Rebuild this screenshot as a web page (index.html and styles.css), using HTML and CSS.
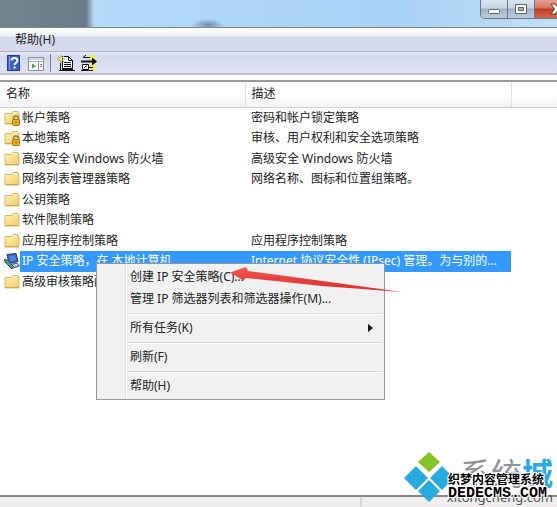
FILE: index.html
```html
<!DOCTYPE html>
<html lang="zh-CN">
<head>
    <meta charset="UTF-8">
    <meta name="viewport" content="width=device-width, initial-scale=1.0">
    <title>安全策略</title>
    <link rel="stylesheet" href="styles.css">
</head>
<body>
    <!-- shared icons -->
    <svg class="defs" aria-hidden="true">
        <defs>
            <linearGradient id="paper" x1="0" y1="0" x2="1" y2="1">
                <stop offset="0" stop-color="#fff3b4"/>
                <stop offset="1" stop-color="#efcb68"/>
            </linearGradient>
            <linearGradient id="red" x1="0" y1="0" x2="0" y2="1">
                <stop offset="0" stop-color="#f25a50"/>
                <stop offset="1" stop-color="#d92c26"/>
            </linearGradient>
            <symbol id="folder" viewBox="0 0 16 16">
                <path d="M1 3.500h7l1-2h5v2h1v10.500H1z" fill="url(#paper)" stroke="#dcb863"/>
                <path d="M9 3h4" stroke="#fffbe8"/>
                <path d="M2 13.500h12" stroke="#cfa750"/>
            </symbol>
            <symbol id="lock" viewBox="0 0 16 16">
                <path d="M9.500 10V8.500a2.500 2.500 0 0 1 5 0V10" fill="none" stroke="#9a7a2c" stroke-width="1.500"/>
                <rect x="8.500" y="9.500" width="7" height="6" rx="1" fill="#e9ae1e" stroke="#a87512"/>
                <path d="M12 11.500v2" stroke="#7a5208"/>
            </symbol>
        </defs>
    </svg>

    <header class="titlebar">
        <div class="controls">
            <button class="control" aria-label="最小化">
                <svg width="14" height="12" viewBox="0 0 14 12"><rect x="1.500" y="6.500" width="11" height="4" rx="1" fill="#fff" stroke="#59616d"/></svg>
            </button>
            <button class="control" aria-label="最大化">
                <svg width="14" height="12" viewBox="0 0 14 12"><path d="M1.500 1.500h11v9h-11z" fill="#fff" stroke="#59616d"/><path d="M4.500 4.500h5v3h-5z" fill="#a5b3c3" stroke="#59616d"/></svg>
            </button>
            <button class="control close" aria-label="关闭">
                <svg width="14" height="12" viewBox="0 0 14 12"><path d="M1 1h4l2 2.500L9 1h4L9.500 6l3.500 5H9L7 8.500 5 11H1l3.500-5z" fill="#fff" stroke="#6b3a3a"/></svg>
            </button>
        </div>
    </header>

    <nav class="menubar">
        <button class="menu-title">帮助(H)</button>
    </nav>

    <div class="toolbar">
        <button class="tool" aria-label="帮助">
            <svg width="16" height="18" viewBox="0 0 16 18">
                <rect x="1.500" y="1.500" width="12" height="15" fill="#3c62c8" stroke="#213b8d"/>
                <path d="M3.500 2v14" stroke="#7f9ce8"/>
                <path d="M5.500 6.500c0-3.500 6-3.500 6 0 0 2.200-3 2.200-3 4.500" fill="none" stroke="#fff" stroke-width="2"/>
                <path d="M7.500 12.500h2v2h-2z" fill="#fff"/>
            </svg>
        </button>
        <button class="tool" aria-label="显示操作窗格">
            <svg width="16" height="18" viewBox="0 0 16 18">
                <path d="M.5 3.500h15v13H.5z" fill="#fff" stroke="#8b93a5"/>
                <path d="M1 5h14M1 7.500h14" stroke="#a9b1c4" stroke-width="1"/>
                <path d="M10.500 8v8" stroke="#8b93a5"/>
                <path d="M4 9.500l4 2.500-4 2.500z" fill="#3ea449"/>
                <path d="M12 10.500h2M12 12.500h2" stroke="#6f7b92"/>
            </svg>
        </button>
        <span class="divider"></span>
        <button class="tool" aria-label="创建 IP 安全策略">
            <svg width="18" height="18" viewBox="0 0 18 18">
                <path d="M5.500 2.500h6l4 4v8h-10z" fill="#fff" stroke="#111"/>
                <path d="M11.500 2.500v4h4M7 8.500h7M7 10.500h7M7 12.500h7" fill="none" stroke="#111"/>
                <path d="M2 16.500h16M3.500 9v7M5 15.500h11" stroke="#111"/>
                <path d="M4 1v8M0 5h8M1 2l6 6M7 2L1 8" stroke="#b5ad28"/>
                <path d="M3 4h2v2H3z" fill="#fffa9a"/>
            </svg>
        </button>
        <button class="tool" aria-label="管理 IP 筛选器">
            <svg width="18" height="18" viewBox="0 0 18 18">
                <path d="M9 1h5v16H9z" fill="#f7ef52"/>
                <path d="M0 7.500h13" stroke="#111" stroke-width="2"/>
                <path d="M11 3.500l5 4-5 4z" fill="#111"/>
                <path d="M2 3.500h7M5 1L2 3.500h3" fill="none" stroke="#111"/>
                <path d="M1.500 10.500h6v5h-6z" fill="#fff" stroke="#111"/>
                <path d="M3 14l3-2.500M8 13.500h4M0 16.500h12" fill="none" stroke="#111"/>
            </svg>
        </button>
    </div>

    <main class="list">
        <table class="policies">
            <colgroup>
                <col class="col-name">
                <col class="col-desc">
                <col>
            </colgroup>
            <thead>
                <tr><th>名称</th><th>描述</th><th></th></tr>
            </thead>
            <tbody>
                <tr>
                    <td><div class="name"><svg class="icon"><use href="#folder"/><use href="#lock"/></svg><span>帐户策略</span></div></td>
                    <td>密码和帐户锁定策略</td><td></td>
                </tr>
                <tr>
                    <td><div class="name"><svg class="icon"><use href="#folder"/><use href="#lock"/></svg><span>本地策略</span></div></td>
                    <td>审核、用户权利和安全选项策略</td><td></td>
                </tr>
                <tr>
                    <td><div class="name"><svg class="icon"><use href="#folder"/></svg><span>高级安全 Windows 防火墙</span></div></td>
                    <td>高级安全 Windows 防火墙</td><td></td>
                </tr>
                <tr>
                    <td><div class="name"><svg class="icon"><use href="#folder"/></svg><span>网络列表管理器策略</span></div></td>
                    <td>网络名称、图标和位置组策略。</td><td></td>
                </tr>
                <tr>
                    <td><div class="name"><svg class="icon"><use href="#folder"/></svg><span>公钥策略</span></div></td>
                    <td></td><td></td>
                </tr>
                <tr>
                    <td><div class="name"><svg class="icon"><use href="#folder"/></svg><span>软件限制策略</span></div></td>
                    <td></td><td></td>
                </tr>
                <tr>
                    <td><div class="name"><svg class="icon"><use href="#folder"/></svg><span>应用程序控制策略</span></div></td>
                    <td>应用程序控制策略</td><td></td>
                </tr>
                <tr class="selected">
                    <td><div class="name">
                        <svg class="icon" viewBox="0 0 16 16">
                            <path d="M3 1.500l9-1 2 8-9 2z" fill="#2f62c4" stroke="#1c3b80"/>
                            <path d="M5 3l6-.8 1.300 5L6.200 8.500z" fill="#4b83e2"/>
                            <path d="M5 12l8-2 2.500 3-8 2.500z" fill="#b8c6dc" stroke="#3e5275"/>
                            <path d="M.5 6.500l3 .5 6 6.500-2 2L1 9z" fill="#4aa36f" stroke="#1f5a43"/>
                        </svg><span>IP 安全策略，在 本地计算机</span></div></td>
                    <td>Internet 协议安全性 (IPsec) 管理。为与别的...</td><td></td>
                </tr>
                <tr>
                    <td><div class="name"><svg class="icon"><use href="#folder"/></svg><span>高级审核策略配置</span></div></td>
                    <td></td><td></td>
                </tr>
            </tbody>
        </table>
    </main>

    <footer class="statusbar"><span class="pane"></span><span class="pane"></span></footer>

    <div class="context-menu" role="menu">
        <button class="item" role="menuitem">创建 IP 安全策略(C)...</button>
        <button class="item" role="menuitem">管理 IP 筛选器列表和筛选器操作(M)...</button>
        <hr>
        <button class="item" role="menuitem">所有任务(K)
            <svg width="5" height="8" viewBox="0 0 5 8"><path d="M0 0l5 4-5 4z" fill="#111"/></svg>
        </button>
        <hr>
        <button class="item" role="menuitem">刷新(F)</button>
        <hr>
        <button class="item" role="menuitem">帮助(H)</button>
    </div>

    <svg class="arrow" width="174" height="32" viewBox="0 0 174 32" aria-hidden="true">
        <path d="M0 9.500L16 4l2 4 60 8 94 13-80-6-76-8-2.500 2.500z" fill="url(#red)"/>
    </svg>

    <div class="watermark">
        <svg class="logo" width="46" height="52" viewBox="0 0 46 52" aria-hidden="true">
            <path d="M25 0l11 10-11 10-11-10z" fill="#84c225"/>
            <path d="M12 14l12 12-12 12L0 26zM38 14l12 12-12 12-12-12zM25 28l11 11-11 11-11-11z" fill="#29abe2"/>
        </svg>
        <div class="brand">系统<b>城</b></div>
        <div class="site">xitongcheng.com</div>
        <div class="stamp">
            <span>织梦内容管理系统</span>
            <span class="domain">DEDECMS.COM</span>
        </div>
    </div>
</body>
</html>
```
FILE: styles.css
```css
* {
    box-sizing: border-box;
}
body {
    position: relative;
    display: flex;
    flex-direction: column;
    min-height: 100vh;
    margin: 0;
    overflow: hidden;
    background: #fff;
    color: #222;
    font: 12px/20px "Noto Sans", "Noto Sans CJK SC", sans-serif;
}
button {
    padding: 0;
    border: 0;
    background: none;
    color: inherit;
    font: inherit;
}
svg {
    display: block;
}
.defs {
    position: absolute;
    width: 0;
    height: 0;
}

/* window frame */
.titlebar {
    display: flex;
    justify-content: flex-end;
    height: 28px;
    overflow: hidden;
    border-bottom: 1px solid #7d8790;
    background:
        radial-gradient(ellipse 16px 6px at 208px 25px, #6f8ca6, transparent),
        linear-gradient(90deg, #72858f 0, #687d89 86px, #b3daf9 94px, #a8d0f5 400px, #c2e0f7 100%);
}
.controls {
    display: flex;
    height: 19px;
    margin-right: -22px;
    border: 1px solid #6b7480;
    border-top: 0;
    border-radius: 0 0 5px 5px;
    overflow: hidden;
}
.control {
    display: flex;
    align-items: center;
    justify-content: center;
    width: 27px;
    border-right: 1px solid #6b7480;
    background: linear-gradient(#d9e4ef 0, #c5d4e3 45%, #9eb2c8 50%, #bccddf 100%);
}
.close {
    width: 43px;
    border-right: 0;
    background: linear-gradient(#e6a294 0, #d4705c 45%, #bd3a22 50%, #d5664a 100%);
}
.menubar {
    height: 24px;
    padding: 2px 15px;
    border-bottom: 1px solid #aeb2bf;
    background: linear-gradient(#fff 0, #f0f1f9 35%, #d5daef 40%, #d5daef 100%);
}
.menu-title {
    display: block;
}
.toolbar {
    display: flex;
    align-items: center;
    gap: 6px;
    height: 23px;
    padding: 0 6px;
    border-bottom: 2px solid #c0c3cf;
    background: linear-gradient(#e8eaf7, #d5daef 20%, #dfe3f3);
}
.divider {
    width: 1px;
    height: 18px;
    background: #6e7891;
}

/* policy list */
.list {
    flex: 1;
    margin-top: 5px;
    border-top: 2px solid #9a9a9a;
}
.policies {
    width: 100%;
    table-layout: fixed;
    border-collapse: collapse;
}
.col-name {
    width: 245px;
}
.col-desc {
    width: 266px;
}
th {
    height: 25px;
    padding: 0 6px;
    border-right: 1px solid #e0e2e5;
    border-bottom: 1px solid #cfd2d6;
    background: linear-gradient(#fff 40%, #f2f3f5);
    font-weight: normal;
    text-align: left;
}
th:last-child {
    border-right: 0;
}
td {
    height: 20px;
    padding: 0 0 0 6px;
    white-space: nowrap;
}
tr:nth-child(even) td {
    height: 21px;
}
td:first-child {
    padding: 0 0 0 4px;
}
.name {
    display: flex;
    align-items: center;
}
.name span {
    flex: 1;
    padding-left: 2px;
}
.icon {
    width: 16px;
    height: 16px;
}
.selected td:nth-child(2) {
    background: #3399ff;
    color: #fff;
}
.selected td:first-child {
    background: linear-gradient(90deg, #fff 20px, #3399ff 20px);
    color: #fff;
}
.statusbar {
    display: flex;
    height: 12px;
    border-top: 2px solid #858585;
    background: #f0eeee;
}
.pane {
    width: 65%;
    border-right: 2px solid #d8d6d6;
}
.pane + .pane {
    width: 22%;
}

/* popup menu */
.context-menu {
    position: absolute;
    top: 263px;
    left: 96px;
    width: 289px;
    padding: 2px;
    border: 1px solid #979797;
    background: linear-gradient(90deg, #f1f1f1 28px, #e2e3e3 28px, #e2e3e3 29px, #fff 29px, #fff 30px, #f1f1f1 30px);
}
.item {
    display: flex;
    align-items: center;
    justify-content: space-between;
    width: 100%;
    height: 22px;
    padding: 0 9px 0 31px;
}
.context-menu hr {
    height: 2px;
    margin: 3px 0 2px 28px;
    border: 0;
    border-top: 1px solid #d9d9d9;
    background: #fff;
}
.arrow {
    position: absolute;
    top: 263px;
    left: 230px;
}

/* watermark over the corner */
.watermark {
    position: absolute;
    right: 0;
    bottom: 0;
    width: 153px;
    height: 56px;
}
.logo {
    position: absolute;
    top: 1px;
    left: 0;
    overflow: visible;
}
.brand,
.site,
.stamp {
    position: absolute;
    right: 4px;
    white-space: nowrap;
}
.brand {
    top: 2px;
    color: #8f9499;
    font-size: 31px;
    line-height: 40px;
}
.brand b {
    color: #29abe2;
}
.site {
    bottom: 0;
    color: #555;
    font-size: 13px;
}
.stamp {
    top: 21px;
    right: 10px;
    display: flex;
    flex-direction: column;
    color: #000;
    font-weight: bold;
    line-height: 16px;
    text-shadow: 1px 0 #fff, -1px 0 #fff, 0 1px #fff, 0 -1px #fff, 1px 1px #fff, -1px -1px #fff, 1px -1px #fff, -1px 1px #fff;
}
.domain {
    font-family: "Liberation Mono", monospace;
    font-size: 15px;
    line-height: 12px;
}
```
